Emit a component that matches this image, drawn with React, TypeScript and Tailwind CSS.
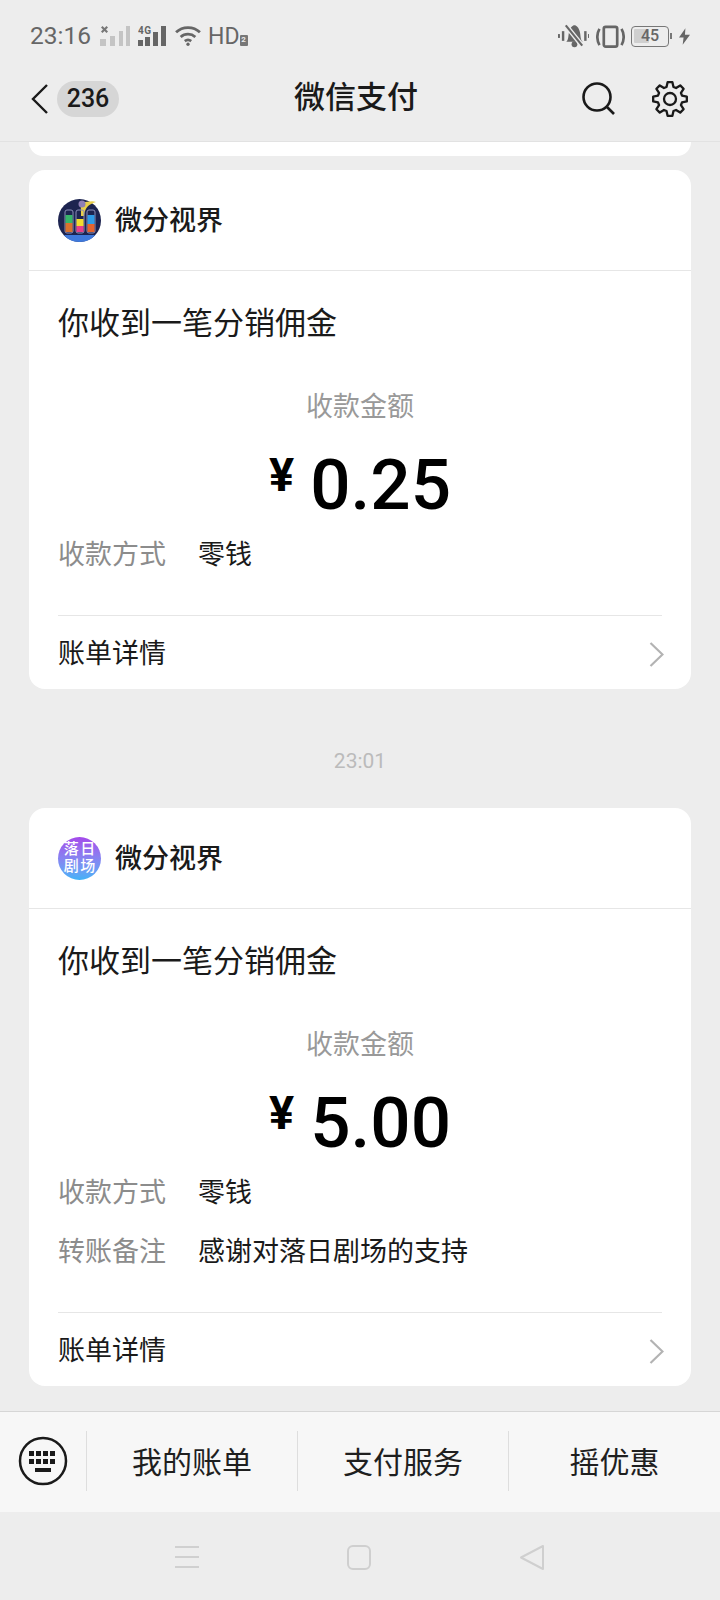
const cjk = "font-['Roboto','Noto_Sans_CJK_SC',sans-serif]";

// 8 tooth gear outline, same shape as the wechat nav icon
function gearPath() {
  const pts: string[] = [];
  const cx = 18;
  const cy = 18;
  for (let i = 0; i < 8; i++) {
    const a = (i * Math.PI) / 4 - Math.PI / 2;
    const step = Math.PI / 8;
    const p = (r: number, t: number) =>
      `${(cx + r * Math.cos(t)).toFixed(2)} ${(cy + r * Math.sin(t)).toFixed(2)}`;
    pts.push(`${i === 0 ? "M" : "L"}${p(12.5, a - step * 0.72)}`);
    pts.push(`L${p(17, a - step * 0.36)}`);
    pts.push(`L${p(17, a + step * 0.36)}`);
    pts.push(`L${p(12.5, a + step * 0.72)}`);
  }
  return pts.join(" ") + "Z";
}

function StatusBar() {
  return (
    <div className="flex h-[70px] items-center justify-between px-[30px] pt-[2px] text-[#666]">
      <div className="flex items-center">
        <span className="text-[24.5px] leading-none">23:16</span>
        <svg className="ml-[9px]" width="30" height="21" viewBox="0 0 30 21" fill="#c4c4c4">
          <path d="M1 1.500L2.500 0 4.500 2 6.500 0 8 1.500 6 3.500 8 5.500 6.500 7 4.500 5 2.500 7 1 5.500 3 3.500z" fill="#777" />
          <rect x="0" y="13" width="6" height="7" />
          <rect x="10" y="10" width="5" height="10" />
          <rect x="19" y="5" width="4" height="15" />
          <rect x="26" y="0" width="4" height="20" />
        </svg>
        <svg className="ml-[8px]" width="29" height="21" viewBox="0 0 29 21" fill="#666">
          <text x="0" y="8" fontSize="10" fontWeight="700" fontFamily="Roboto" textLength="13">4G</text>
          <rect x="0" y="14" width="5" height="6" />
          <rect x="7" y="11" width="5" height="9" />
          <rect x="15" y="6" width="5" height="14" />
          <rect x="23" y="0" width="5" height="20" />
        </svg>
        <svg className="ml-[7px]" width="28" height="22" viewBox="0 0 30 24" fill="none" stroke="#666" strokeWidth="3">
          <path d="M2 8c7-7 19-7 26 0" />
          <path d="M7 13c4.500-4 11.500-4 16 0" />
          <path d="M11.500 17.500c2-1.500 5-1.500 7 0" />
          <circle cx="15" cy="21" r="1.800" fill="#666" stroke="none" />
        </svg>
        <span className="ml-[6px] flex items-end text-[23px] leading-none">
          HD
          <span className="mb-[2px] flex h-[11px] w-[8px] items-center justify-center rounded-[1px] bg-[#777] text-[8px] font-bold text-[#ececec]">2</span>
        </span>
      </div>
      <div className="flex items-center">
        <svg width="31" height="24" viewBox="0 0 32 24" fill="#666">
          <path d="M8.500 18c2.500-2 2-7 3-10.500C12.500 3.500 15 1 17 1s4.500 2.500 5.500 6.500c1 3.500.5 8.500 3 10.500H8.500z" />
          <circle cx="17" cy="20.500" r="3" />
          <rect x="0" y="10" width="2" height="4" />
          <rect x="4" y="7" width="2.500" height="10" />
          <rect x="27" y="7" width="2.500" height="10" />
          <rect x="31" y="10" width="1.500" height="4" />
          <path d="M8 1l17 21" stroke="#ececec" strokeWidth="5" />
          <path d="M8 1l17 21" stroke="#666" strokeWidth="2.200" />
        </svg>
        <svg className="ml-[7px]" width="29" height="23" viewBox="0 0 30 24" fill="none" stroke="#666" strokeWidth="2.800">
          <rect x="8" y="2" width="14" height="20.500" rx="2" />
          <path d="M3.500 4c-3 5-3 12 0 17" />
          <path d="M26.500 4c3 5 3 12 0 17" />
        </svg>
        <div className="relative ml-[6px] mr-[3px] h-[21px] w-[38px] rounded-[4px] border-[1.500px] border-[#777]">
          <div className="mx-[2px] my-[2px] h-[14px] w-[15px] rounded-[1px] bg-[#cfcfcf]" />
          <span className="absolute inset-0 flex items-center justify-center text-[16px] font-medium leading-none">45</span>
          <span className="absolute right-[-4px] top-[6px] h-[6px] w-[2px] bg-[#777]" />
        </div>
        <svg className="ml-[7px]" width="11" height="17" viewBox="0 0 12 18" fill="#666">
          <path d="M7 0L0 10h5l-1 8 8-11H6.500z" />
        </svg>
      </div>
    </div>
  );
}

function NavBar() {
  return (
    <div className="relative flex h-[72px] items-center border-b border-[#e2e2e2] pb-[14px] pl-[31px] pr-[32px] text-[#1a1a1a]">
      <svg width="17" height="30" viewBox="0 0 17 30" fill="none" stroke="#1a1a1a" strokeWidth="2.400">
        <path d="M16 1L2 15l14 14" />
      </svg>
      <span className="ml-[9px] flex h-[36px] w-[62px] items-center justify-center rounded-full bg-[#d6d6d6] text-[25px] font-medium leading-none">236</span>
      <span className="absolute left-0 right-[8px] top-[12px] text-center text-[31px] font-medium leading-none">微信支付</span>
      <div className="ml-auto flex items-center gap-[37px]">
        <svg width="33" height="33" viewBox="0 0 33 33" fill="none" stroke="#1a1a1a" strokeWidth="2.600">
          <circle cx="15" cy="15" r="13.500" />
          <path d="M24.500 24.500L32 32" />
        </svg>
        <svg width="36" height="36" viewBox="0 0 36 36" fill="none" stroke="#1a1a1a" strokeWidth="2.300" strokeLinejoin="round">
          <path d={gearPath()} />
          <circle cx="18" cy="18" r="6" />
        </svg>
      </div>
    </div>
  );
}

function TubesAvatar() {
  return (
    <svg width="43" height="43" viewBox="0 0 43 43">
      <circle cx="21.500" cy="21.500" r="21.500" fill="#1d2450" />
      <path d="M22 3c6 1 11-2 16 0-6 2-11 4-12 14h-3c0-5 0-9-1-14z" fill="#e9cf4a" />
      <circle cx="24" cy="5" r="3.500" fill="#8f7fb5" />
      <g fill="none" stroke="#8c8fb8" strokeWidth="1">
        <rect x="7" y="11" width="8" height="23" rx="2" />
        <rect x="18" y="11" width="8" height="23" rx="2" />
        <rect x="29" y="11" width="8" height="23" rx="2" />
      </g>
      <rect x="7.500" y="16" width="7" height="8" fill="#37b56a" />
      <rect x="7.500" y="24" width="7" height="9" fill="#d9722e" />
      <rect x="18.500" y="20" width="7" height="7" fill="#f3dc2e" />
      <rect x="18.500" y="27" width="7" height="6" fill="#e8408a" />
      <rect x="29.500" y="16" width="7" height="9" fill="#2f9be6" />
      <rect x="29.500" y="25" width="7" height="8" fill="#e5642e" />
      <path d="M6 36h31c-3 4-8 7-15.500 7S9 40 6 36z" fill="#3f79dc" />
    </svg>
  );
}

function TheaterAvatar() {
  return (
    <div className="grid h-[43px] w-[43px] grid-cols-2 place-items-center rounded-full bg-gradient-to-b from-[#a347ea] to-[#3fb2f7] px-[5px] py-[4px] text-[15px] font-medium leading-[17px] text-white">
      <span>落</span>
      <span>日</span>
      <span>剧</span>
      <span>场</span>
    </div>
  );
}

function PayCard({
  avatar,
  amount,
  note,
}: {
  avatar: React.ReactNode;
  amount: string;
  note?: string;
}) {
  return (
    <div className="mx-[29px] rounded-[16px] bg-white">
      <div className="flex h-[101px] items-center gap-[14px] border-b border-[#e6e6e6] pl-[29px]">
        {avatar}
        <span className="pt-[2px] text-[27px] font-medium leading-none text-[#1a1a1a]">微分视界</span>
      </div>
      <div className="px-[29px]">
        <p className="pt-[32px] text-[31px] leading-[42px] text-[#1a1a1a]">你收到一笔分销佣金</p>
        <p className="mt-[44px] text-center text-[27px] leading-[36px] text-[#999]">收款金额</p>
        <div className="mt-[19px] flex h-[80px] items-center justify-center text-black">
          <span className="mr-[16px] mt-[-20px] text-[47px] font-bold leading-none">¥</span>
          <span className="text-[71px] font-medium leading-none">{amount}</span>
        </div>
        <div className="mt-[13px] flex flex-col gap-[23px] text-[27px] leading-[36px]">
          <div className="flex">
            <span className="w-[140px] text-[#8c8c8c]">收款方式</span>
            <span className="text-[#1a1a1a]">零钱</span>
          </div>
          {note && (
            <div className="flex">
              <span className="w-[140px] text-[#8c8c8c]">转账备注</span>
              <span className="text-[#1a1a1a]">{note}</span>
            </div>
          )}
        </div>
        <div className="mt-[42px] flex h-[74px] items-center justify-between border-t border-[#e6e6e6] pt-[4px]">
          <span className="text-[27px] leading-none text-[#1a1a1a]">账单详情</span>
          <svg className="mr-[-2px]" width="15" height="25" viewBox="0 0 15 25" fill="none" stroke="#b3b3b3" strokeWidth="2.200">
            <path d="M1.500 1l12 11.500-12 11.500" />
          </svg>
        </div>
      </div>
    </div>
  );
}

function MenuItem({ label, width }: { label: string; width: string }) {
  return (
    <div className={`flex h-[60px] items-center justify-center border-l border-[#dedede] pt-[3px] text-[30px] leading-none text-[#1f1f1f] ${width}`}>
      {label}
    </div>
  );
}

export default function App() {
  return (
    <div className={`flex h-[1600px] w-[720px] flex-col overflow-hidden bg-[#ededed] ${cjk}`}>
      <StatusBar />
      <NavBar />
      <div className="flex-1 overflow-hidden">
        <div className="mx-[29px] h-[14px] rounded-b-[16px] bg-white" />
        <div className="mt-[14px]">
          <PayCard avatar={<TubesAvatar />} amount="0.25" />
        </div>
        <p className="mt-[60px] mb-[35px] text-center text-[21px] leading-[24px] text-[#bbb]">23:01</p>
        <PayCard avatar={<TheaterAvatar />} amount="5.00" note="感谢对落日剧场的支持" />
      </div>
      <div className="flex h-[101px] items-center border-t border-[#d6d6d6] bg-[#f7f7f7] pb-[2px]">
        <div className="flex w-[86px] justify-center">
          <svg width="50" height="50" viewBox="0 0 50 50">
            <circle cx="25" cy="25" r="23" fill="none" stroke="#1a1a1a" strokeWidth="2.500" />
            <g fill="#1a1a1a">
              <rect x="11" y="15" width="5" height="5" />
              <rect x="18" y="15" width="5" height="5" />
              <rect x="25" y="15" width="5" height="5" />
              <rect x="32" y="15" width="5" height="5" />
              <rect x="11" y="23" width="5" height="5" />
              <rect x="18" y="23" width="5" height="5" />
              <rect x="25" y="23" width="5" height="5" />
              <rect x="32" y="23" width="5" height="5" />
              <rect x="17" y="32" width="16" height="4" />
            </g>
          </svg>
        </div>
        <MenuItem label="我的账单" width="w-[211px]" />
        <MenuItem label="支付服务" width="w-[211px]" />
        <MenuItem label="摇优惠" width="w-[212px]" />
      </div>
      <div className="flex h-[88px] items-center justify-center gap-[148px] pt-[2px]">
        <svg width="24" height="24" viewBox="0 0 24 24" stroke="#d0d0d0" strokeWidth="2">
          <path d="M0 2h24M0 12h24M0 22h24" />
        </svg>
        <svg width="24" height="25" viewBox="0 0 24 25" fill="none" stroke="#cfcfcf" strokeWidth="2">
          <rect x="1" y="1" width="22" height="23" rx="5" />
        </svg>
        <svg width="26" height="27" viewBox="0 0 26 27" fill="none" stroke="#cfcfcf" strokeWidth="2">
          <path d="M24 2v23L2 13.500z" strokeLinejoin="round" />
        </svg>
      </div>
    </div>
  );
}
